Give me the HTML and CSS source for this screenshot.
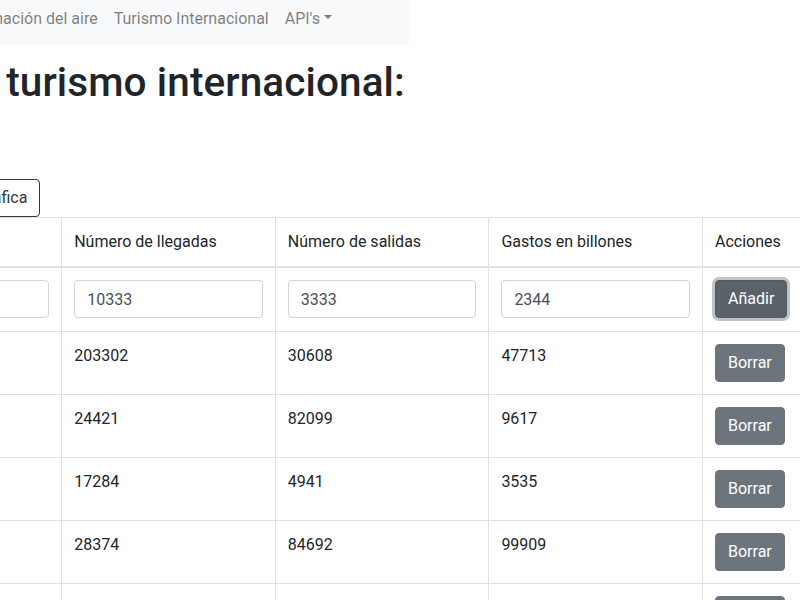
FILE: index.html
```html
<!DOCTYPE html>
<html lang="es">
<head>
<meta charset="utf-8">
<title>Turismo internacional</title>
<link rel="stylesheet" href="styles.css">
</head>
<body>
<div class="page">
  <nav class="navbar">
    <a class="brand" href="#">SOS Datos</a>
    <ul class="nav">
      <li><a class="nav-link" href="#">Inicio</a></li>
      <li><a class="nav-link" href="#">Contaminación del aire</a></li>
      <li><a class="nav-link" href="#">Turismo Internacional</a></li>
      <li><a class="nav-link dropdown-toggle" href="#">API's</a></li>
    </ul>
  </nav>
  <main class="container">
    <h1 class="title">Gestión de datos de turismo internacional:</h1>
    <div class="toolbar">
      <button class="btn btn-outline">Cargar datos iniciales</button>
      <button class="btn btn-outline">Borrar todo</button>
      <button class="btn btn-outline">Ver gráfica</button>
    </div>
    <table class="table">
      <colgroup>
        <col><col><col><col><col><col class="col-actions">
      </colgroup>
      <thead>
        <tr>
          <th>País</th>
          <th>Año</th>
          <th>Número de llegadas</th>
          <th>Número de salidas</th>
          <th>Gastos en billones</th>
          <th>Acciones</th>
        </tr>
      </thead>
      <tbody>
        <tr class="entry-row">
          <td><input class="form-control" type="text" value="Francia"></td>
          <td><input class="form-control" type="text" value=""></td>
          <td><input class="form-control" type="text" value="10333"></td>
          <td><input class="form-control" type="text" value="3333"></td>
          <td><input class="form-control" type="text" value="2344"></td>
          <td><button class="btn btn-secondary is-focused">Añadir</button></td>
        </tr>
        <tr>
          <td>España</td><td>2017</td><td>203302</td><td>30608</td><td>47713</td>
          <td><button class="btn btn-secondary">Borrar</button></td>
        </tr>
        <tr>
          <td>Alemania</td><td>2017</td><td>24421</td><td>82099</td><td>9617</td>
          <td><button class="btn btn-secondary">Borrar</button></td>
        </tr>
        <tr>
          <td>Portugal</td><td>2017</td><td>17284</td><td>4941</td><td>3535</td>
          <td><button class="btn btn-secondary">Borrar</button></td>
        </tr>
        <tr>
          <td>Italia</td><td>2017</td><td>28374</td><td>84692</td><td>99909</td>
          <td><button class="btn btn-secondary">Borrar</button></td>
        </tr>
        <tr>
          <td>Reino Unido</td><td>2017</td><td>37651</td><td>70386</td><td>63240</td>
          <td><button class="btn btn-secondary">Borrar</button></td>
        </tr>
      </tbody>
    </table>
  </main>
</div>
</body>
</html>
```
FILE: styles.css
```css
html, body {
  margin: 0;
  overflow: hidden;
  height: 600px;
}

body {
  font-family: Roboto, "Open Sans", "Liberation Sans", sans-serif;
  font-size: 16px;
  line-height: 1.5;
  color: #212529;
  background: #fff;
}

*, *::before, *::after { box-sizing: border-box; }

/* the screenshot shows the page scrolled 381px right and 12px down */
.page {
  width: 790px;
  margin: -12px 0 0 -381px;
}

.navbar {
  display: flex;
  align-items: center;
  padding: 8px 16px;
  background: #f8f9fa;
}

.brand {
  font-size: 20px;
  line-height: 30px;
  padding: 5px 0 6px;
  margin-right: 142px;
  color: rgba(0, 0, 0, .9);
  text-decoration: none;
  white-space: nowrap;
}

.nav {
  display: flex;
  list-style: none;
  margin: 0;
  padding: 0;
}

.nav-link {
  display: block;
  padding: 10px 8px 6px;
  color: rgba(0, 0, 0, .5);
  text-decoration: none;
  white-space: nowrap;
}

.dropdown-toggle::after {
  content: "";
  display: inline-block;
  margin-left: .255em;
  vertical-align: .255em;
  border-top: .3em solid;
  border-right: .3em solid transparent;
  border-left: .3em solid transparent;
}

.container {
  padding: 0 15px;
}

.title {
  font-size: 40.5px;
  font-weight: 500;
  line-height: 48px;
  margin: 13px 0 8px;
  white-space: nowrap;
  letter-spacing: 0.1px;
}

.toolbar {
  display: flex;
  gap: 9px;
  margin-top: 73px;
}

.btn {
  display: inline-block;
  font-family: inherit;
  font-size: 16px;
  line-height: 24px;
  padding: 6px 12px;
  border: 1px solid transparent;
  border-radius: 4px;
  white-space: nowrap;
  cursor: pointer;
}

.btn-outline {
  color: #343a40;
  background: transparent;
  border-color: #343a40;
}

.btn-secondary {
  color: #fff;
  background: #6c757d;
  border-color: #6c757d;
}

.btn-secondary.is-focused {
  background: #5a6268;
  border-color: #545b62;
  box-shadow: 0 0 0 3px rgba(130, 138, 145, .5);
}

.table {
  width: 1167px;
  table-layout: fixed;
  border-collapse: collapse;
  color: #212529;
}

.col-actions { width: 98px; }

.table th,
.table td {
  padding: 12px;
  vertical-align: top;
  text-align: left;
  font-weight: 400;
  border: 1px solid #dee2e6;
  white-space: nowrap;
  overflow: hidden;
}

.table thead th {
  border-bottom-width: 2px;
}

.table .entry-row td {
  padding-bottom: 13px;
}

.form-control {
  display: block;
  width: 100%;
  height: 38px;
  padding: 6px 12px;
  font-family: inherit;
  font-size: 16px;
  line-height: 24px;
  color: #495057;
  background: #fff;
  border: 1px solid #ced4da;
  border-radius: 4px;
}
```
